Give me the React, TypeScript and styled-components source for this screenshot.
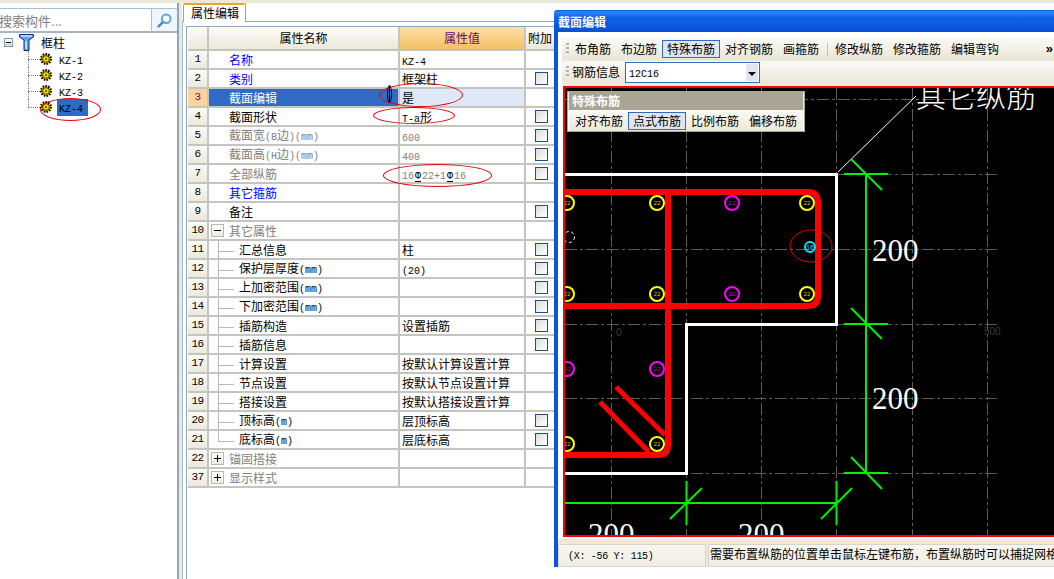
import React from "react";
import styled, { createGlobalStyle } from "styled-components";

const Global = createGlobalStyle`
  html, body { margin: 0; padding: 0; background: #fff; overflow: hidden; }
  * { box-sizing: border-box; }
`;

const CJK = `"Noto Sans CJK SC", "Liberation Sans", sans-serif`;

const Page = styled.div`
  position: relative;
  width: 1054px;
  height: 579px;
  overflow: hidden;
  background: #fff;
  font: 12px/16px ${CJK};
  color: #000;
  display: flex;
  flex-direction: column;
`;
const TopStrip = styled.div`
  height: 3px;
  flex: none;
  background: #ece9d8;
`;
const Main = styled.div`
  flex: 1;
  display: flex;
  min-height: 0;
`;
const Latin = styled.span`
  font-family: "Liberation Mono", monospace;
  font-size: 10px;
`;
const Mixed = ({ text }: { text: string }) => (
  <>
    {text.split(/([\x00-\x7f]+)/).filter(Boolean).map((part, i) =>
      /^[\x00-\x7f]+$/.test(part) ? <Latin key={i}>{part}</Latin> : <span key={i}>{part}</span>
    )}
  </>
);

/* left pane */
const LeftPane = styled.aside`
  width: 177px;
  flex: none;
  padding-top: 5px;
  display: flex;
  flex-direction: column;
`;
const SearchRow = styled.div`
  height: 25px;
  flex: none;
  display: flex;
  border-top: 1px solid #a9bfd6;
  border-bottom: 2px solid #a7b4c4;
`;
const SearchInput = styled.div`
  width: 153px;
  border-right: 1px solid #a9bfd6;
  color: #808080;
  font-size: 13px;
  line-height: 23px;
  margin-left: -1px;
  white-space: nowrap;
  overflow: hidden;
`;
const SearchDots = styled.span`
  color: #8f8fc8;
`;
const SearchButton = styled.div`
  flex: 1;
  background: #f1f4f8;
  display: flex;
  align-items: center;
  justify-content: center;
`;
const Tree = styled.div`
  display: flex;
  flex-direction: column;
  padding-top: 1px;
`;
const TreeRoot = styled.div`
  height: 17px;
  display: flex;
  align-items: center;
  padding-left: 4px;
`;
const ExpandBox = styled.span`
  width: 9px;
  height: 9px;
  border: 1px solid #7f9db9;
  background: linear-gradient(#fff, #d8d5c8);
  position: relative;
  flex: none;
  &::after {
    content: "";
    position: absolute;
    left: 1px;
    right: 1px;
    top: 3px;
    height: 1px;
    background: #000;
  }
`;
const TreeRootLabel = styled.span`
  margin-left: 6px;
`;
const TreeChild = styled.div`
  height: 16px;
  display: flex;
  align-items: center;
  padding-left: 28px;
`;
const Dots = styled.span<{ $last?: boolean }>`
  position: relative;
  width: 12px;
  height: 100%;
  flex: none;
  &::before {
    content: "";
    position: absolute;
    left: 0;
    top: 0;
    bottom: ${(p) => (p.$last ? "50%" : "0")};
    border-left: 1px dotted #808080;
  }
  &::after {
    content: "";
    position: absolute;
    left: 0;
    right: 0;
    top: 50%;
    border-top: 1px dotted #808080;
  }
`;
const TreeLabel = styled.span<{ $selected?: boolean }>`
  margin-left: 5px;
  width: 31px;
  height: 17px;
  line-height: 16px;
  padding-left: 2px;
  background: ${(p) => (p.$selected ? "#316ac5" : "transparent")};
`;
const Splitter = styled.div`
  width: 5px;
  flex: none;
  border-left: 2px solid #8ea4c0;
  background: #ece9d8;
`;

/* property panel */
const RightPane = styled.section`
  flex: 1;
  display: flex;
  flex-direction: column;
  min-width: 0;
`;
const TabBar = styled.div`
  height: 19px;
  flex: none;
  display: flex;
  padding-left: 1px;
  border-bottom: 1px solid #8ea4c0;
`;
const Tab = styled.div`
  width: 63px;
  height: 19px;
  background: #fff;
  border: 1px solid #8ea4c0;
  border-top: 2px solid #e9a53a;
  border-bottom: none;
  border-radius: 2px 2px 0 0;
  padding-left: 7px;
  line-height: 16px;
`;
const TabBody = styled.div`
  flex: 1;
  border-left: 1px solid #a9bfd6;
  padding: 4px 0 0 3px;
  min-height: 0;
`;
const Table = styled.div`
  height: 100%;
  width: 420px;
  border-left: 1px solid #8ea4c0;
  border-top: 1px solid #8ea4c0;
  padding-left: 1px;
`;
const Row = styled.div`
  display: grid;
  grid-template-columns: 21px 191px 126px 62px;
  height: 19px;
`;
const HeadRow = styled(Row)`
  height: 24px;
`;
const Cell = styled.div`
  border-right: 2px solid #c4c4c0;
  border-bottom: 2px solid #c4c4c0;
  white-space: nowrap;
  overflow: hidden;
  min-width: 0;
`;
const HeadCell = styled(Cell)<{ $active?: boolean }>`
  background: ${(p) =>
    p.$active ? "linear-gradient(#fedfa8, #f3c063)" : "linear-gradient(#fdfcf9, #ebe8da)"};
  color: ${(p) => (p.$active ? "#6a0a6a" : "#000")};
  text-align: center;
  line-height: 21px;
`;
const HeadCellLeft = styled(HeadCell)`
  text-align: left;
  padding-left: 2px;
`;
const NumCell = styled(Cell)<{ $active?: boolean }>`
  background: ${(p) => (p.$active ? "#fdd59a" : "linear-gradient(#fbfaf6, #ece9dc)")};
  color: ${(p) => (p.$active ? "#80006a" : "#000")};
  text-align: center;
  font-family: "Liberation Mono", monospace;
  font-size: 11px;
  letter-spacing: -0.6px;
  line-height: 17px;
`;
const NameCell = styled(Cell)<{ $tone: string; $active?: boolean }>`
  background: ${(p) => (p.$active ? "#316ac5" : "#fff")};
  color: ${(p) => (p.$active ? "#fff" : p.$tone)};
  display: flex;
  align-items: center;
  padding-left: 20px;
  line-height: 17px;
`;
const GroupCell = styled(NameCell)`
  padding-left: 2px;
`;
const SubCell = styled(NameCell)`
  padding-left: 9px;
`;
const Branch = styled.span<{ $last?: boolean }>`
  position: relative;
  width: 21px;
  height: calc(100% + 2px);
  margin-bottom: -2px;
  flex: none;
  align-self: flex-start;
  &::before {
    content: "";
    position: absolute;
    left: 0;
    top: 0;
    bottom: ${(p) => (p.$last ? "50%" : "0")};
    border-left: 1px solid #b8b8b8;
  }
  &::after {
    content: "";
    position: absolute;
    left: 0;
    width: 16px;
    top: 50%;
    border-top: 1px solid #b8b8b8;
  }
`;
const Toggle = styled.span<{ $open?: boolean }>`
  width: 13px;
  height: 13px;
  flex: none;
  margin-right: 5px;
  border: 1px solid #b8b8b8;
  background: linear-gradient(#fff, #ecebe4);
  position: relative;
  &::before {
    content: "";
    position: absolute;
    left: 2px;
    right: 2px;
    top: 5px;
    height: 1px;
    background: #000;
  }
  &::after {
    content: "";
    display: ${(p) => (p.$open ? "none" : "block")};
    position: absolute;
    top: 2px;
    bottom: 2px;
    left: 5px;
    width: 1px;
    background: #000;
  }
`;
const ValueCell = styled(Cell)<{ $active?: boolean; $muted?: boolean }>`
  background: ${(p) => (p.$active ? "#dfe8f6" : "#fff")};
  color: ${(p) => (p.$muted ? "#808080" : "#000")};
  padding-left: 2px;
  line-height: 17px;
`;
const SteelMark = styled.span`
  display: inline-block;
  color: #000;
  font-size: 10px;
  line-height: 9px;
  margin: 0 1px;
  border-bottom: 1px solid #000;
`;
const ExtraCell = styled(Cell)`
  display: flex;
  align-items: center;
  padding-left: 9px;
`;
const CheckBox = styled.span`
  width: 13px;
  height: 13px;
  border: 1px solid #1c5180;
  background: linear-gradient(135deg, #dcdcd7, #fff);
`;

/* overlay marks */
const Ellipse = styled.div<{ $x: number; $y: number; $w: number; $h: number }>`
  position: absolute;
  left: ${(p) => p.$x}px;
  top: ${(p) => p.$y}px;
  width: ${(p) => p.$w}px;
  height: ${(p) => p.$h}px;
  border: 1px solid #e8000c;
  border-radius: 50%;
  pointer-events: none;
`;
const CursorMark = styled.div`
  position: absolute;
  left: 387px;
  top: 85px;
  width: 5px;
  height: 18px;
  border: 1px solid #000;
  border-radius: 50%;
  &::after {
    content: "";
    position: absolute;
    left: 1px;
    top: 0;
    bottom: 0;
    border-left: 1px solid #000;
  }
`;

/* section window */
const Window = styled.div`
  position: absolute;
  left: 554px;
  top: 10px;
  width: 506px;
  height: 557px;
  display: flex;
  flex-direction: column;
  border-radius: 3px 3px 0 0;
  overflow: hidden;
`;
const TitleBar = styled.div`
  height: 22px;
  flex: none;
  background: linear-gradient(#0a5fe4, #2f83f5 10%, #0f5fe6 35%, #0a58de 80%, #0a4fd0);
  color: #fff;
  font-weight: 700;
  padding-left: 4px;
  line-height: 23px;
`;
const Client = styled.div`
  flex: 1;
  min-height: 0;
  border: solid #0b55db;
  border-width: 0 4px 3px 4px;
  background: #fff;
  padding-top: 6px;
  display: flex;
  flex-direction: column;
`;
const ToolRows = styled.div`
  margin-left: 4px;
  padding-bottom: 3px;
  background: #ece9d8;
  display: flex;
  flex-direction: column;
  gap: 1px;
`;
const Toolbar = styled.div`
  height: 22px;
  display: flex;
  align-items: center;
  padding: 0 3px 0 4px;
  border-radius: 3px 0 0 3px;
  background: linear-gradient(#fbfaf6, #e9e6d7);
`;
const Gripper = styled.span`
  width: 4px;
  height: 12px;
  flex: none;
  background: repeating-linear-gradient(#b5b2a4 0 2px, transparent 2px 4px);
  background-size: 3px 100%;
  background-repeat: no-repeat;
`;
const ToolButton = styled.span<{ $active?: boolean }>`
  height: 18px;
  padding: 0 4px;
  border: 1px solid ${(p) => (p.$active ? "#316ac5" : "transparent")};
  background: ${(p) => (p.$active ? "#e1e6ee" : "transparent")};
  line-height: 15px;
  white-space: nowrap;
  flex: none;
`;
const ToolSep = styled.span`
  width: 1px;
  height: 13px;
  flex: none;
  margin: 0 2px 0 3px;
  background: #c5c2b3;
`;
const MoreMark = styled.span`
  margin-left: auto;
  font: 700 13px/12px "Liberation Sans", sans-serif;
`;
const ComboLabel = styled.span`
  margin-left: 2px;
  margin-right: 5px;
  flex: none;
`;
const Combo = styled.div`
  width: 135px;
  height: 21px;
  flex: none;
  border: 1px solid #316ac5;
  background: #fff;
  display: flex;
  align-items: stretch;
  padding: 1px;
`;
const ComboText = styled.span`
  flex: 1;
  padding-left: 2px;
  line-height: 15px;
`;
const ComboDrop = styled.span`
  width: 12px;
  background: #e1e6ee;
  position: relative;
  &::after {
    content: "";
    position: absolute;
    left: 2px;
    top: 8px;
    border: 4px solid transparent;
    border-top-color: #000;
    border-bottom: 0;
  }
`;
const CanvasWrap = styled.div`
  position: relative;
  height: 451px;
  flex: none;
  margin-left: 5px;
  background: #000;
  border: 2px solid #f00;
  border-right: none;
  overflow: hidden;
`;
const CanvasSvg = styled.svg`
  display: block;
`;
const Palette = styled.div`
  position: absolute;
  left: 2px;
  top: 3px;
  width: 238px;
  height: 41px;
  border: 1px solid #a8a595;
  background: #ece9d8;
  display: flex;
  flex-direction: column;
`;
const PaletteTitle = styled.div`
  height: 18px;
  flex: none;
  margin: 0 1px;
  background: #a8a595;
  color: #fff;
  font-weight: 700;
  padding-left: 3px;
  line-height: 17px;
`;
const PaletteBody = styled.div`
  flex: 1;
  display: flex;
  align-items: center;
  padding-left: 1px;
  background: linear-gradient(#fbfaf6, #ece9d8);
  border: solid #fff;
  border-width: 0 1px;
`;
const StatusArea = styled.div`
  flex: 1;
  background: #ece9d8;
  border-top: 2px solid #fff;
  padding: 5px 0 1px;
  display: flex;
  gap: 2px;
`;
const StatusBox = styled.div<{ $w?: number }>`
  width: ${(p) => (p.$w ? `${p.$w}px` : "auto")};
  flex: ${(p) => (p.$w ? "none" : "1")};
  min-width: 0;
  background: linear-gradient(#f8f7f1, #f0eee3);
  border: 1px solid #d8d5c6;
  white-space: nowrap;
  overflow: hidden;
  line-height: 18px;
  padding-left: 1px;
`;
const StatusCoords = styled(StatusBox)`
  padding-left: 9px;
  letter-spacing: -0.3px;
`;

/* icons */
const Gear = () => (
  <svg width="12" height="12" viewBox="0 0 12 12" style={{ flex: "none" }}>
    <circle cx="6" cy="6" r="5" fill="#f5e400" stroke="#000" strokeWidth="2" strokeDasharray="1.6 1.2" />
    <circle cx="6" cy="6" r="3.4" fill="#f5e400" stroke="#000" strokeWidth="0.8" />
    <circle cx="6" cy="6" r="1.2" fill="#806000" />
  </svg>
);
const ColumnIcon = () => (
  <svg width="16" height="17" viewBox="0 0 16 17" style={{ marginLeft: 6, flex: "none" }}>
    <path d="M0.5 0.5H14.5V3L10 6V16.5H5V6L0.5 3Z" fill="#5aa0ea" stroke="#0b2f8a" />
    <path d="M2 2H13" stroke="#cfe6ff" strokeWidth="1.4" />
    <path d="M7 7V15" stroke="#d8ecff" strokeWidth="1.6" />
  </svg>
);
const SearchGlyph = () => (
  <svg width="15" height="15" viewBox="0 0 15 15">
    <circle cx="9.2" cy="5.8" r="4.3" fill="#fff" stroke="#5aa5e6" strokeWidth="2" />
    <path d="M5.8 9.2L1.6 13.4" stroke="#3f8fdc" strokeWidth="2.6" strokeLinecap="round" />
  </svg>
);

/* data */
const BLUE = "#0000ff";
const GRAY = "#808080";
type R = {
  n: number;
  name: string;
  value?: string;
  tone?: string;
  check?: boolean;
  kind?: "top" | "group" | "sub";
  open?: boolean;
  last?: boolean;
  muted?: boolean;
  active?: boolean;
  steel?: boolean;
};
const rows: R[] = [
  { n: 1, name: "名称", value: "KZ-4", tone: BLUE },
  { n: 2, name: "类别", value: "框架柱", tone: BLUE, check: true },
  { n: 3, name: "截面编辑", value: "是", active: true },
  { n: 4, name: "截面形状", value: "T-a形", check: true },
  { n: 5, name: "截面宽(B边)(mm)", value: "600", tone: GRAY, muted: true, check: true },
  { n: 6, name: "截面高(H边)(mm)", value: "400", tone: GRAY, muted: true, check: true },
  { n: 7, name: "全部纵筋", tone: GRAY, muted: true, check: true, steel: true },
  { n: 8, name: "其它箍筋", tone: BLUE },
  { n: 9, name: "备注", check: true },
  { n: 10, name: "其它属性", kind: "group", open: true, tone: GRAY },
  { n: 11, name: "汇总信息", value: "柱", kind: "sub", check: true },
  { n: 12, name: "保护层厚度(mm)", value: "(20)", kind: "sub", check: true },
  { n: 13, name: "上加密范围(mm)", kind: "sub", check: true },
  { n: 14, name: "下加密范围(mm)", kind: "sub", check: true },
  { n: 15, name: "插筋构造", value: "设置插筋", kind: "sub", check: true },
  { n: 16, name: "插筋信息", kind: "sub", check: true },
  { n: 17, name: "计算设置", value: "按默认计算设置计算", kind: "sub" },
  { n: 18, name: "节点设置", value: "按默认节点设置计算", kind: "sub" },
  { n: 19, name: "搭接设置", value: "按默认搭接设置计算", kind: "sub" },
  { n: 20, name: "顶标高(m)", value: "层顶标高", kind: "sub", check: true },
  { n: 21, name: "底标高(m)", value: "层底标高", kind: "sub", check: true, last: true },
  { n: 22, name: "锚固搭接", kind: "group", tone: GRAY },
  { n: 37, name: "显示样式", kind: "group", tone: GRAY },
];

const PropertyRow = ({ r }: { r: R }) => {
  const tone = r.tone ?? "#000";
  const label = <span><Mixed text={r.name} /></span>;
  return (
    <Row>
      <NumCell $active={r.active}>{r.n}</NumCell>
      {r.kind === "group" ? (
        <GroupCell $tone={tone}>
          <Toggle $open={r.open} />
          {label}
        </GroupCell>
      ) : r.kind === "sub" ? (
        <SubCell $tone={tone}>
          <Branch $last={r.last} />
          {label}
        </SubCell>
      ) : (
        <NameCell $tone={tone} $active={r.active}>{label}</NameCell>
      )}
      <ValueCell $active={r.active} $muted={r.muted}>
        {r.steel ? (
          <Latin>
            16<SteelMark>Φ</SteelMark>22+1<SteelMark>Φ</SteelMark>16
          </Latin>
        ) : (
          r.value && <Mixed text={r.value} />
        )}
      </ValueCell>
      <ExtraCell>{r.check && <CheckBox />}</ExtraCell>
    </Row>
  );
};

const GX = [611, 686, 761, 836, 912, 987];
const GY = [99, 174, 249, 324, 398, 473];
const bars: [number, number, string][] = [
  [567, 203, "#ffff00"], [657, 203, "#ffff00"], [807, 203, "#ffff00"],
  [567, 294, "#ffff00"], [657, 294, "#ffff00"], [807, 294, "#ffff00"],
  [732, 203, "#ff00ff"], [732, 294, "#ff00ff"],
  [567, 369, "#ff00ff"], [657, 369, "#ff00ff"],
  [567, 444, "#ffff00"], [657, 444, "#ffff00"],
];

const SectionDrawing = () => (
  <CanvasSvg width="495" height="447" viewBox="565 88 495 447">
    <g stroke="#5c5c5c" strokeWidth="1" strokeDasharray="12 3 3 3">
      {GX.map((x) => <line key={x} x1={x + 0.5} y1="88" x2={x + 0.5} y2="535" />)}
      {GY.map((y) => <line key={y} x1="565" y1={y + 0.5} x2="998" y2={y + 0.5} />)}
    </g>
    <g fill="#3c3c3c" fontFamily="Liberation Sans, sans-serif" fontSize="10">
      <text x="616" y="336">0</text>
      <text x="984" y="335">500</text>
    </g>
    <path d="M560 174.5H836.5V324.5H686.5V473.5H560" fill="none" stroke="#fff" strokeWidth="3" />
    <g fill="none" stroke="#f00" strokeWidth="6">
      <path d="M560 192H808Q818 192 818 202V296Q818 306 808 306H560" />
      <path d="M668 192V445Q668 455 658 455H560" />
      <path d="M616 387L665 435M600 402L649 452" strokeWidth="5" />
    </g>
    {bars.map(([x, y, c]) => (
      <g key={`${x}-${y}`}>
        <circle cx={x} cy={y} r="7" fill="#000" stroke={c} strokeWidth="2" />
        <text x={x} y={y + 2} textAnchor="middle" fontFamily="Liberation Mono, monospace" fontSize="6" fill={c === "#ffff00" ? "#c8c800" : "#c000c0"}>22</text>
      </g>
    ))}
    <circle cx="810" cy="247" r="5" fill="#000" stroke="#00e5ff" strokeWidth="2" />
    <text x="810" y="249.5" textAnchor="middle" fontFamily="Liberation Mono, monospace" fontSize="6.5" fill="#00e5ff">16</text>
    <ellipse cx="811" cy="246" rx="21" ry="16" fill="none" stroke="#e00000" strokeWidth="1" />
    <circle cx="569" cy="237" r="5.5" fill="none" stroke="#fff" strokeWidth="1" strokeDasharray="3 2.5" />
    <path d="M838 172L916 96" stroke="#fff" strokeWidth="1" />
    <g stroke="#00ee00" strokeWidth="2" fill="none">
      <path d="M866 174V473M844 174H888M844 324H888M844 473H888" />
      <path d="M851 159L882 190M851 308L882 339M851 457L882 489" />
      <path d="M565 503H836M686.5 481V525M836.5 481V525M670 519L702 488M821 519L852 488" />
    </g>
    <g fill="#fff" fontFamily="Liberation Serif, serif" fontSize="31">
      <text x="872" y="261">200</text>
      <text x="872" y="409">200</text>
      <text x="588" y="545">200</text>
      <text x="738" y="545">200</text>
    </g>
    <text x="916" y="107" fill="#fff" fontFamily={CJK} fontSize="30" fontWeight="300">其它纵筋</text>
  </CanvasSvg>
);

export default function App() {
  return (
    <Page>
      <Global />
      <TopStrip />
      <Main>
        <LeftPane>
          <SearchRow>
            <SearchInput>
              搜索构件<SearchDots>...</SearchDots>
            </SearchInput>
            <SearchButton><SearchGlyph /></SearchButton>
          </SearchRow>
          <Tree>
            <TreeRoot>
              <ExpandBox />
              <ColumnIcon />
              <TreeRootLabel>框柱</TreeRootLabel>
            </TreeRoot>
            {["KZ-1", "KZ-2", "KZ-3", "KZ-4"].map((k, i) => (
              <TreeChild key={k}>
                <Dots $last={i === 3} />
                <Gear />
                <TreeLabel $selected={i === 3}><Latin>{k}</Latin></TreeLabel>
              </TreeChild>
            ))}
          </Tree>
        </LeftPane>
        <Splitter />
        <RightPane>
          <TabBar><Tab>属性编辑</Tab></TabBar>
          <TabBody>
            <Table>
              <HeadRow>
                <HeadCell />
                <HeadCell>属性名称</HeadCell>
                <HeadCell $active>属性值</HeadCell>
                <HeadCellLeft>附加</HeadCellLeft>
              </HeadRow>
              {rows.map((r) => <PropertyRow key={r.n} r={r} />)}
            </Table>
          </TabBody>
        </RightPane>
      </Main>

      <Ellipse $x={40} $y={98} $w={61} $h={23} />
      <Ellipse $x={379} $y={83} $w={84} $h={24} />
      <Ellipse $x={373} $y={107} $w={82} $h={17} />
      <Ellipse $x={383} $y={164} $w={109} $h={23} />
      <CursorMark />

      <Window>
        <TitleBar>截面编辑</TitleBar>
        <Client>
          <ToolRows>
            <Toolbar>
              <Gripper />
              <ToolButton>布角筋</ToolButton>
              <ToolButton>布边筋</ToolButton>
              <ToolButton $active>特殊布筋</ToolButton>
              <ToolButton>对齐钢筋</ToolButton>
              <ToolButton>画箍筋</ToolButton>
              <ToolSep />
              <ToolButton>修改纵筋</ToolButton>
              <ToolButton>修改箍筋</ToolButton>
              <ToolButton>编辑弯钩</ToolButton>
              <MoreMark>»</MoreMark>
            </Toolbar>
            <Toolbar>
              <Gripper />
              <ComboLabel>钢筋信息</ComboLabel>
              <Combo>
                <ComboText><Latin>12C16</Latin></ComboText>
                <ComboDrop />
              </Combo>
            </Toolbar>
          </ToolRows>
          <CanvasWrap>
            <SectionDrawing />
            <Palette>
              <PaletteTitle>特殊布筋</PaletteTitle>
              <PaletteBody>
                <ToolButton>对齐布筋</ToolButton>
                <ToolButton $active>点式布筋</ToolButton>
                <ToolButton>比例布筋</ToolButton>
                <ToolButton>偏移布筋</ToolButton>
              </PaletteBody>
            </Palette>
          </CanvasWrap>
          <StatusArea>
            <StatusCoords $w={148}><Latin>(X: -56 Y: 115)</Latin></StatusCoords>
            <StatusBox>需要布置纵筋的位置单击鼠标左键布筋，布置纵筋时可以捕捉网格</StatusBox>
          </StatusArea>
        </Client>
      </Window>
    </Page>
  );
}
